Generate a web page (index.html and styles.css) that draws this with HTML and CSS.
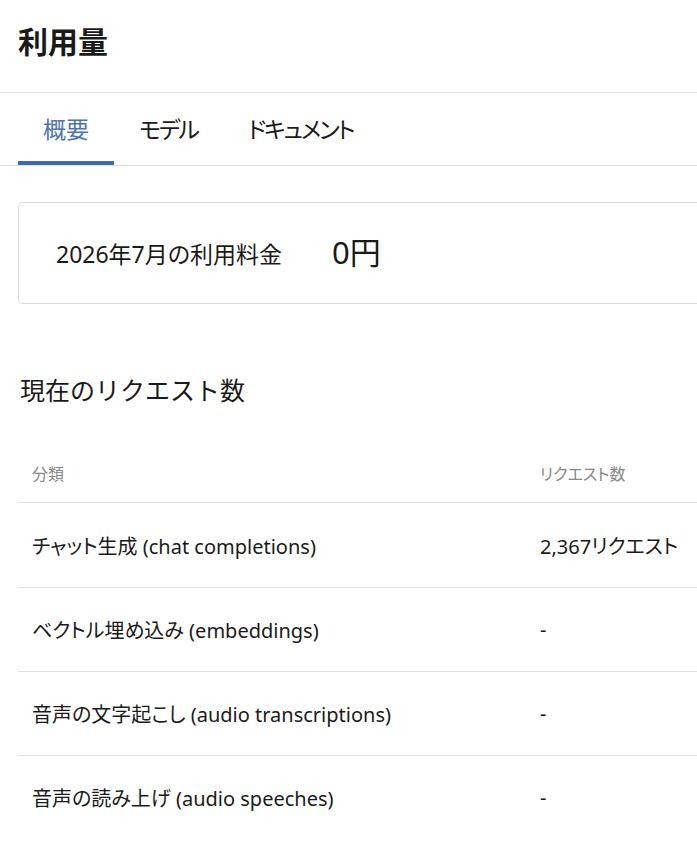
FILE: index.html
```html
<!DOCTYPE html>
<html lang="ja">
<head>
<meta charset="utf-8">
<title>利用量</title>
<link rel="stylesheet" href="styles.css">
</head>
<body>
<div class="page">
  <header class="header">
    <h1 class="title">利用量</h1>
  </header>
  <nav class="tabs">
    <div class="tab active">概要</div>
    <div class="tab kana">モデル</div>
    <div class="tab kana">ドキュメント</div>
  </nav>
  <main class="content">
    <section class="card">
      <span class="card-label">2026年7月の利用料金</span>
      <span class="card-value">0円</span>
    </section>
    <h2 class="section-title">現在のリクエスト数</h2>
    <div class="table">
      <div class="row head">
        <div class="cell">分類</div>
        <div class="cell">リクエスト数</div>
      </div>
      <div class="row first">
        <div class="cell">チャット生成 (chat completions)</div>
        <div class="cell">2,367リクエスト</div>
      </div>
      <div class="row">
        <div class="cell">ベクトル埋め込み (embeddings)</div>
        <div class="cell">-</div>
      </div>
      <div class="row">
        <div class="cell">音声の文字起こし (audio transcriptions)</div>
        <div class="cell">-</div>
      </div>
      <div class="row last">
        <div class="cell">音声の読み上げ (audio speeches)</div>
        <div class="cell">-</div>
      </div>
    </div>
  </main>
</div>
</body>
</html>
```
FILE: styles.css
```css
html, body {
  margin: 0;
  padding: 0;
  background: #ffffff;
  overflow: hidden;
}
body {
  font-family: "Noto Sans", "Noto Sans CJK JP", sans-serif;
  font-feature-settings: "palt";
  color: #1a1a1a;
}
.page {
  width: 800px;
}
.header {
  height: 92px;
  border-bottom: 1px solid #e0e0e0;
  display: flex;
  align-items: center;
  padding-left: 18px;
}
.title {
  margin: 0;
  font-size: 30px;
  font-weight: 700;
  line-height: 1;
  margin-top: -8px;
}
.tabs {
  display: flex;
  padding-left: 18px;
  height: 72px;
  border-bottom: 1px solid #e0e0e0;
}
.tab {
  padding: 0 25px;
  font-size: 23px;
  display: flex;
  align-items: center;
  border-bottom: 4px solid transparent;
  padding-top: 2px;
  color: #1a1a1a;
}
.tab.kana {
  letter-spacing: -2px;
}
.tab.active {
  color: #4a72b8;
  border-bottom-color: #3d6bb3;
}
.content {
  padding-left: 18px;
}
.card {
  margin-top: 36px;
  height: 100px;
  border: 1px solid #dcdcdc;
  border-radius: 5px;
  display: flex;
  align-items: center;
  padding-left: 37px;
  gap: 50px;
}
.card-label {
  font-size: 23px;
}
.card-value {
  font-size: 31px;
  margin-top: -6px;
}
.section-title {
  margin: 68px 0 0 2px;
  font-size: 25px;
  font-weight: 400;
  line-height: 36px;
  font-feature-settings: normal;
}
.table {
  margin-top: 36px;
}
.row {
  display: grid;
  grid-template-columns: 508px 1fr;
  padding: 0 14px;
  height: 83px;
  align-items: center;
  border-bottom: 1px solid #e0e0e0;
  font-size: 20px;
}
.row.first {
  height: 84px;
}
.row.head {
  height: 58px;
  font-size: 16px;
  color: #888888;
}
.row.last {
  border-bottom: none;
}
.cell {
  white-space: nowrap;
}
```
